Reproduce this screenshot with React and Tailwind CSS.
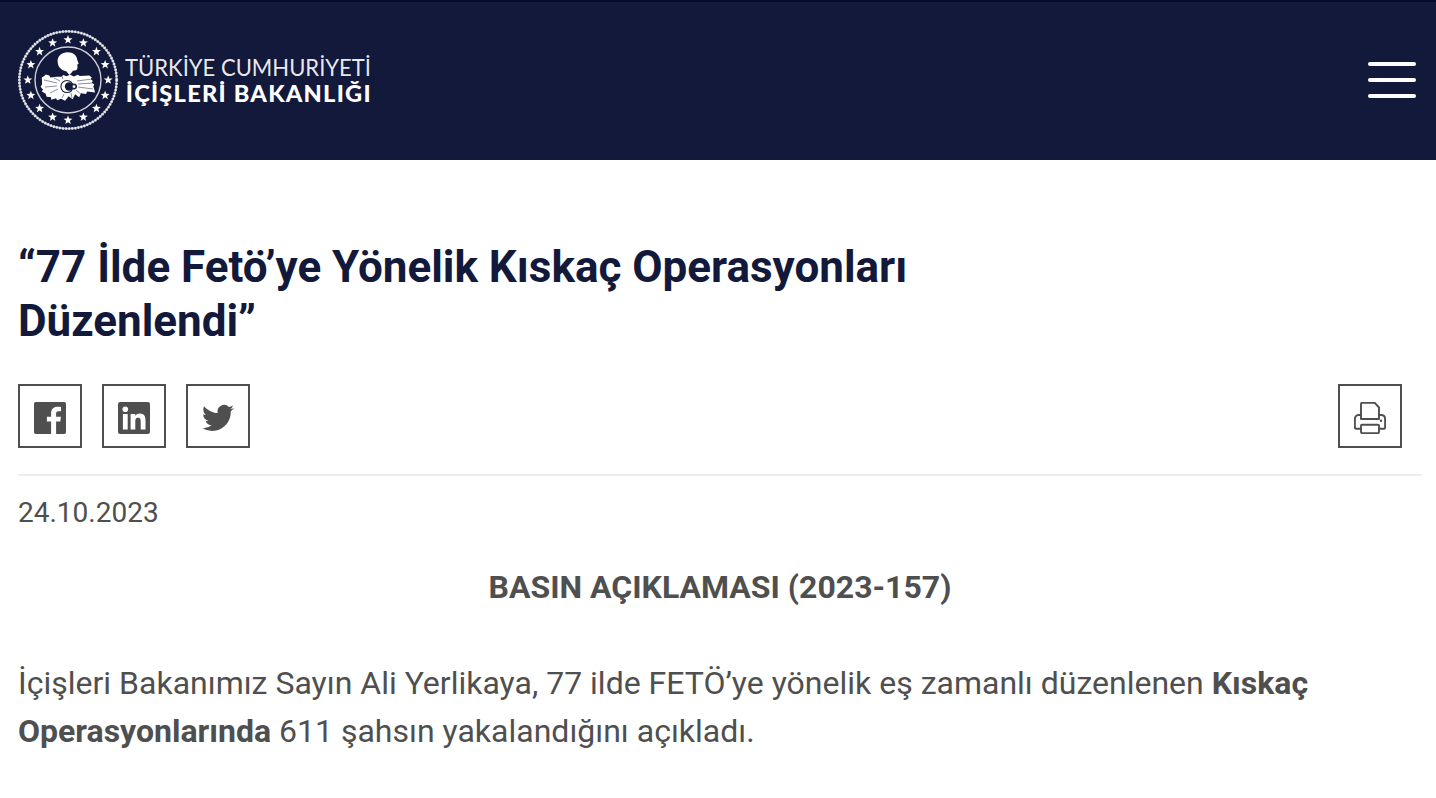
import React from "react";

const stars = Array.from({ length: 16 }, (_, i) => (i * Math.PI) / 8);

function starPoints(cx, cy, r) {
  return Array.from({ length: 10 }, (_, i) => {
    const a = -Math.PI / 2 + (i * Math.PI) / 5;
    const q = i % 2 ? r * 0.42 : r;
    return `${(cx + q * Math.cos(a)).toFixed(2)},${(cy + q * Math.sin(a)).toFixed(2)}`;
  }).join(" ");
}

function Logo() {
  return (
    <svg className="block" width="360" height="104" viewBox="0 0 360 104" fill="#fff">
      <g fill="none" stroke="#fff">
        <circle cx="52" cy="52" r="48.6" strokeWidth="1.8" strokeOpacity="0.7" />
        <circle cx="52" cy="52" r="48.7" strokeWidth="2.8" strokeOpacity="0.75" strokeDasharray="1.6 1.5" />
        <circle cx="52" cy="52" r="33" strokeWidth="1.4" strokeOpacity="0.8" />
      </g>
      {stars.map((a) => (
        <polygon key={a} points={starPoints(52 + 40.2 * Math.sin(a), 52 - 40.2 * Math.cos(a), 4.7)} />
      ))}
      <path d="M41.600 33c0-5.200 4.200-8.800 10-8.800 5.600 0 9.200 2.900 9.700 7.800l1.400 3.800-1.400.7.200 3.400c-.3 2.300-2 2.700-4.200 2.600l-3.800 4.600-3.300-3.800c-5.500-.8-8.600-5-8.600-10.300z" />
      <path d="M25.800 49.500l2.500-1.500 1.500-1.500 3.500 1 1 2 6.500-.8 4.500 0 2-1.700 3 1.200 4-1.400 3.500 1.600 4-1.700 2 1.200 9.500-.5 2.500 2-1 1.500 2 2-1 1.500 2.500 2-1 1.800 1.800 6.200-8-.8-1 2.500-5-.8-2 4-4-3-2.500 5-4-3-3.500 4.500-4-2-4 1.500-1-2-5 1.500 0-2.500-4.500-.5-1-3-4-2.500 1.500-1.500-2.500-3 1.500-2.500z" />
      <g stroke="#13193b" strokeWidth=".7" strokeOpacity=".7">
        <path d="M28 52l13 3M29 59l12-1M34 65l8-4M46 48l1 3M61 53l15-2M62 56l15-1M62 59l15 2M60 62l6 5M38 50l6 3M55 65l1 5M48 66l-2 4" />
      </g>
      <circle cx="51" cy="58.500" r="6.600" fill="#13193b" />
      <circle cx="51" cy="58.500" r="5.500" />
      <circle cx="53" cy="58.500" r="4.200" fill="#13193b" />
      <circle cx="58" cy="58.500" r="3" fill="#13193b" />
      <polygon points={starPoints(58, 58.500, 2.400)} />
      <g className="font-['Lato',sans-serif]">
        <text x="109" y="47.800" fontSize="22.500" fontWeight="400" fillOpacity=".92" textLength="246" lengthAdjust="spacingAndGlyphs">TÜRKİYE CUMHURİYETİ</text>
        <text x="109.800" y="73.800" fontSize="23" fontWeight="900" letterSpacing="1.200" textLength="246" lengthAdjust="spacingAndGlyphs">İÇİŞLERİ BAKANLIĞI</text>
      </g>
    </svg>
  );
}

function IconBox({ label, children }) {
  return (
    <a aria-label={label} className="flex size-16 items-center justify-center border-2 border-[#4f4f4f] pt-1 text-[#4f4f4f]">
      <svg width="32" height="32" viewBox="0 0 32 32" fill="currentColor">
        {children}
      </svg>
    </a>
  );
}

export default function App() {
  return (
    <div className="h-[798px] w-[1436px] overflow-hidden bg-white font-['Roboto',sans-serif] text-[#4f4f4f]">
      <header className="flex h-40 items-center justify-between border-t-2 border-[#080a31] bg-[#13193b] pr-5 pb-0.5 pl-4">
        <Logo />
        <button aria-label="Menü" className="flex flex-col gap-3">
          <span className="h-1 w-12 rounded-full bg-white" />
          <span className="h-1 w-12 rounded-full bg-white" />
          <span className="h-1 w-12 rounded-full bg-white" />
        </button>
      </header>
      <main className="pt-20 pr-3.5 pl-[18px]">
        <h1 className="text-[44px] leading-[54px] font-bold tracking-[-0.01px] text-[#13193b]">
          “77 İlde Fetö’ye Yönelik Kıskaç Operasyonları
          <br />
          Düzenlendi”
        </h1>
        <div className="mt-9 flex justify-between border-b-2 border-[#ededed] pr-5 pb-[26px]">
          <div className="flex gap-5">
            <IconBox label="Facebook">
              <path d="M1.800 0h28.400A1.800 1.800 0 0 1 32 1.800v28.400a1.800 1.800 0 0 1-1.800 1.800h-8.100V19.600h4.200l.6-4.800h-4.800v-3.100c0-1.400.4-2.400 2.400-2.400H27V5c-.4-.1-2-.2-3.700-.2-3.700 0-6.200 2.300-6.200 6.400v3.600h-4.200v4.800h4.200V32H1.800A1.800 1.800 0 0 1 0 30.200V1.800A1.800 1.800 0 0 1 1.800 0z" />
            </IconBox>
            <IconBox label="LinkedIn">
              <rect width="32" height="32" rx="2.200" />
              <g fill="#fff">
                <circle cx="7.300" cy="7.300" r="2.800" />
                <path d="M4.900 12h4.800v15.400H4.900zM12.600 12h4.600v2.100c.7-1.300 2.300-2.500 4.600-2.500 4.700 0 5.700 3 5.700 7.200v8.600h-4.800v-7.500c0-1.900-.1-4.200-2.500-4.200-2.600 0-2.900 2-2.900 4.100v7.600h-4.700z" />
              </g>
            </IconBox>
            <IconBox label="Twitter">
              <path transform="scale(1.3333)" d="M23.953 4.570a10 10 0 0 1-2.825.775 4.958 4.958 0 0 0 2.163-2.723c-.951.555-2.005.959-3.127 1.184a4.920 4.920 0 0 0-8.384 4.482C7.690 8.095 4.067 6.130 1.640 3.162a4.822 4.822 0 0 0-.666 2.475c0 1.710.870 3.213 2.188 4.096a4.904 4.904 0 0 1-2.228-.616v.06a4.923 4.923 0 0 0 3.946 4.827 4.996 4.996 0 0 1-2.212.085 4.936 4.936 0 0 0 4.604 3.417 9.867 9.867 0 0 1-6.102 2.105c-.390 0-.779-.023-1.170-.067a13.995 13.995 0 0 0 7.557 2.209c9.053 0 13.998-7.496 13.998-13.985 0-.210 0-.420-.015-.630a9.935 9.935 0 0 0 2.460-2.548z" />
            </IconBox>
          </div>
          <IconBox label="Yazdır">
            <g fill="none" stroke="currentColor" strokeWidth="1.900" strokeLinejoin="round" strokeLinecap="round">
              <path d="M7 17V1.900a1 1 0 0 1 1-1h12.800L25 5.500V17z" />
              <path d="M7 26.700H1.900a1 1 0 0 1-1-1V17c0-2.500 1.500-4 4-4H7M25 13h2c2.500 0 4.100 1.500 4.100 4v8.700a1 1 0 0 1-1 1H25" />
              <rect x="7" y="22.700" width="18" height="8.400" rx="1" />
            </g>
            <circle cx="27" cy="18.700" r="1.200" />
          </IconBox>
        </div>
        <p className="mt-[21px] text-[28px] leading-8">24.10.2023</p>
        <p className="mt-[34px] text-center text-[32px] leading-12 font-bold">BASIN AÇIKLAMASI (2023-157)</p>
        <p className="mt-12 text-[32px] leading-12">
          İçişleri Bakanımız Sayın Ali Yerlikaya, 77 ilde FETÖ’ye yönelik eş zamanlı düzenlenen <strong className="font-bold">Kıskaç</strong>
          <br />
          <strong className="font-bold">Operasyonlarında</strong> 611 şahsın yakalandığını açıkladı.
        </p>
      </main>
    </div>
  );
}
